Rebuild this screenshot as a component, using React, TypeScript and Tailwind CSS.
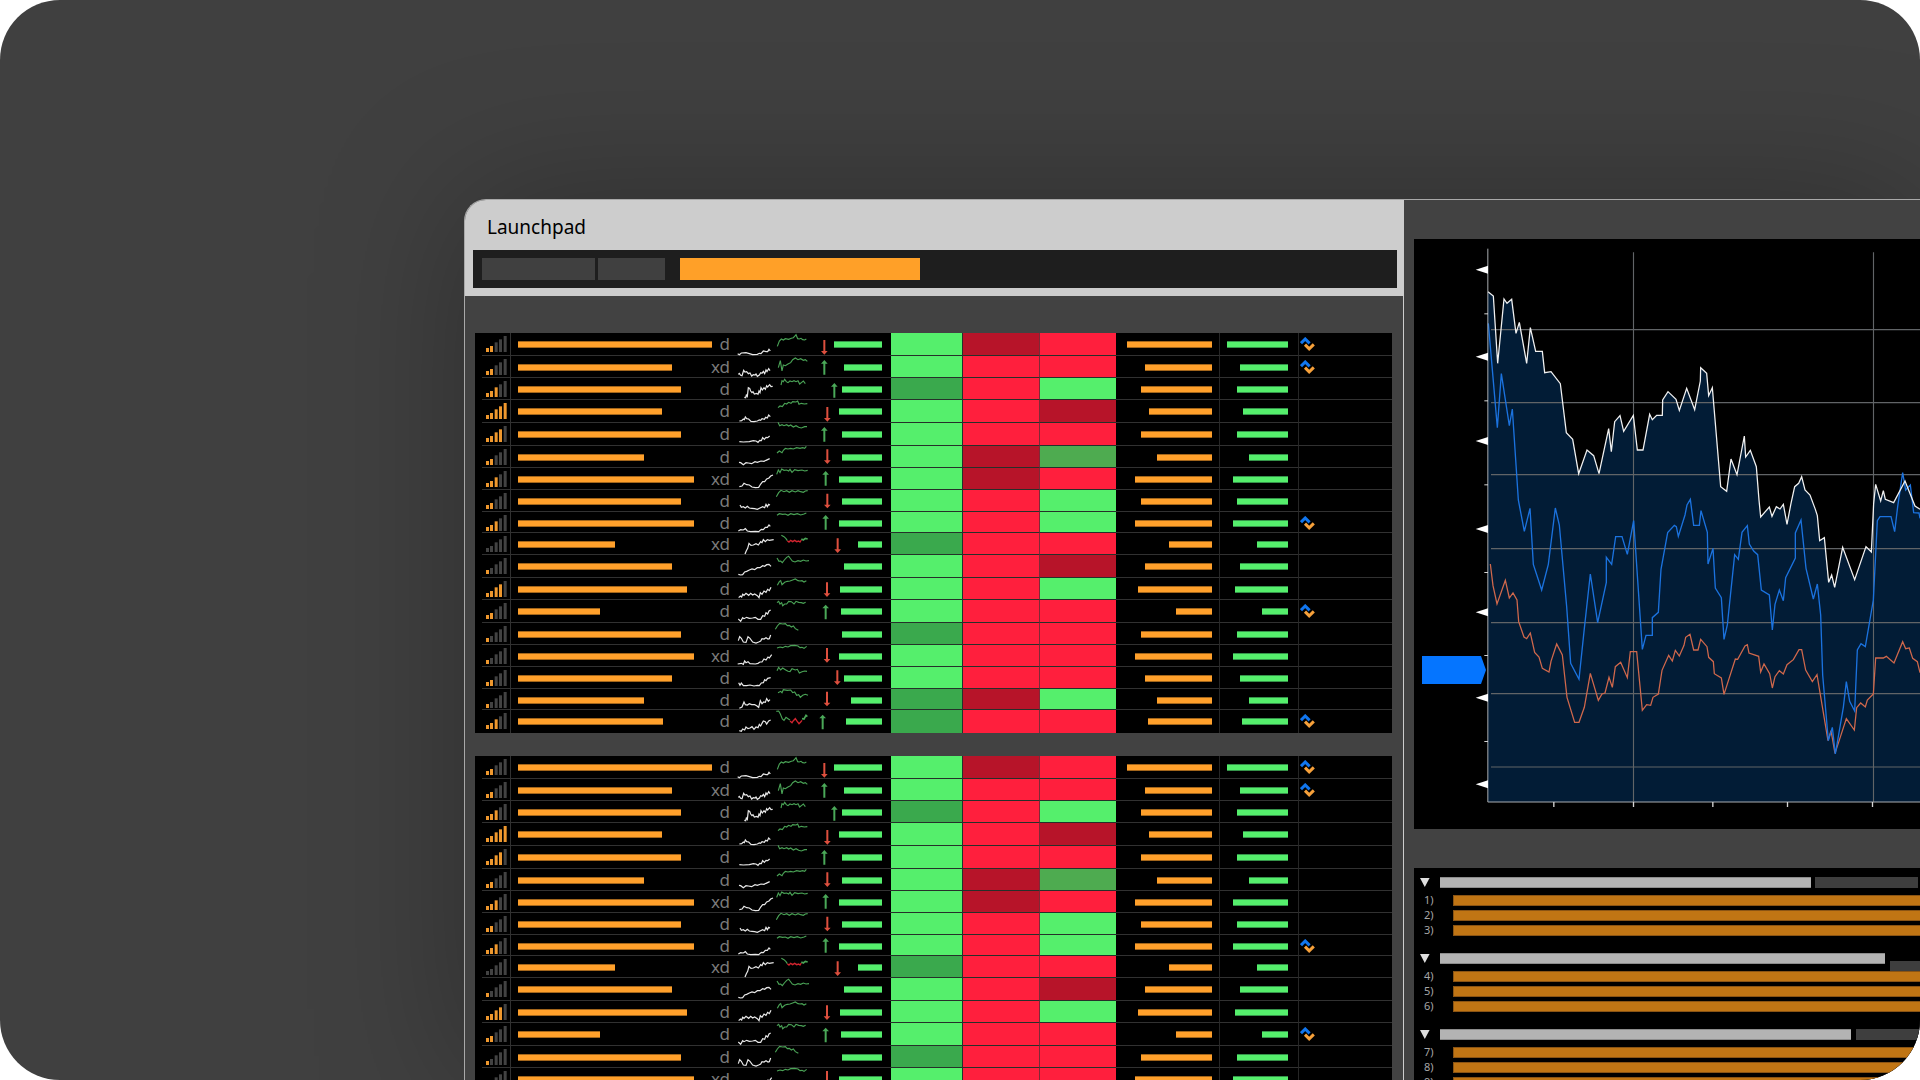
import clsx from "clsx";

type Heat = "g" | "G" | "m" | "r" | "R";

interface Row {
  h: string;
  signal: number;
  name: number;
  tag: "d" | "xd";
  low: string;
  high: string;
  dip?: string;
  tail?: string;
  arrow?: ["up" | "down", number, number];
  gain: number;
  heat: [Heat, Heat, Heat];
  ask: number;
  bid: number;
  swap?: boolean;
}

const H21 = "h-[21px]";
const H22 = "h-[22px]";
const H23 = "h-[23px]";

const heatColors: Record<Heat, string> = {
  g: "bg-[#55ef6c]",
  G: "bg-[#3aa94d]",
  m: "bg-[#4eab50]",
  r: "bg-[#ff1f3d]",
  R: "bg-[#b71429]",
};

// Sparkline points use three units per pixel
const rows: Row[] = [
  {
    h: H23, signal: 2, name: 194, tag: "d",
    low: "2,62 7,65 13,60 27,59 37,62 47,65 61,64 67,61 72,62 79,54 87,56 92,56 96,49 100,54",
    high: "121,40 127,24 133,18 139,21 145,17 155,19 163,16 169,14 174,9 177,5 182,17 187,18 192,16 197,20 203,21 208,18",
    arrow: ["down", 262, 21], gain: 48, heat: ["g", "R", "r"], ask: 85, bid: 61, swap: true,
  },
  {
    h: H22, signal: 2, name: 154, tag: "xd",
    low: "4,55 7,52 11,58 15,59 20,43 24,48 29,47 34,53 39,51 44,60 49,56 54,57 57,54 61,61 67,57 71,50 75,52 79,46 83,53 87,42 90,47 95,38 99,44",
    high: "124,35 130,14 135,45 139,27 145,29 153,24 161,20 167,11 175,6 183,11 191,8 199,13 205,11 211,16",
    arrow: ["up", 262, 12], gain: 38, heat: ["g", "r", "r"], ask: 67, bid: 48, swap: true,
  },
  {
    h: H22, signal: 3, name: 163, tag: "d",
    low: "22,58 26,59 28,51 31,55 34,29 38,31 41,39 45,44 48,41 52,48 59,46 63,49 66,39 69,44 72,29 76,36 81,29 85,34 89,23 92,27 98,20 102,26 107,25",
    high: "132,21 135,8 139,11 143,4 148,11 153,14 159,9 165,11 171,8 177,11 183,8 188,18 194,13 199,9 205,17",
    arrow: ["up", 292, 15], gain: 40, heat: ["G", "r", "g"], ask: 71, bid: 51,
  },
  {
    h: H23, signal: 5, name: 144, tag: "d",
    low: "7,63 14,62 19,57 22,59 25,51 29,56 35,57 42,64 51,65 61,63 67,60 71,61 75,56 82,58 86,52 91,54 95,45 100,50",
    high: "123,23 129,18 136,20 143,10 149,12 155,7 162,10 167,5 177,6 182,3 186,13 193,10 202,12 211,11",
    arrow: ["down", 271, 21], gain: 43, heat: ["g", "r", "R"], ask: 63, bid: 45,
  },
  {
    h: H23, signal: 4, name: 163, tag: "d",
    low: "7,56 19,57 37,56 49,53 57,54 63,58 68,52 73,53 77,44 82,49 87,43 92,44 98,39",
    high: "123,-2 128,8 135,5 141,8 149,5 155,9 161,6 169,12 177,8 185,13 193,15 203,11 210,11",
    arrow: ["up", 262, 12], gain: 40, heat: ["g", "r", "r"], ask: 71, bid: 51,
  },
  {
    h: H22, signal: 2, name: 126, tag: "d",
    low: "6,49 11,50 19,56 27,50 34,51 44,53 54,47 61,49 72,45 81,46 87,43 98,38",
    high: "120,21 127,15 135,20 139,13 145,7 153,9 161,7 169,9 179,5 189,7 197,5 203,7 208,1",
    arrow: ["down", 271, 10], gain: 40, heat: ["g", "R", "m"], ask: 55, bid: 39,
  },
  {
    h: H22, signal: 3, name: 176, tag: "xd",
    low: "7,56 15,54 21,46 29,50 37,51 45,57 55,59 65,58 71,48 77,41 83,41 89,33 96,30 101,24 108,21",
    high: "119,19 124,6 129,14 134,3 141,7 149,6 155,9 159,4 165,13 173,5 183,8 195,6 203,9 212,7",
    arrow: ["up", 266, 9], gain: 43, heat: ["g", "R", "r"], ask: 77, bid: 55,
  },
  {
    h: H22, signal: 2, name: 163, tag: "d",
    low: "9,45 13,52 19,50 25,54 31,49 37,54 45,55 53,56 61,58 69,54 77,50 83,53 87,43 91,50 95,43 99,45",
    high: "118,20 125,8 132,1 141,5 149,2 157,7 165,2 175,6 183,2 191,5 199,7 205,3 212,2",
    arrow: ["down", 271, 11], gain: 40, heat: ["g", "r", "g"], ask: 71, bid: 51,
  },
  {
    h: H21, signal: 3, name: 176, tag: "d",
    low: "4,57 11,53 19,54 25,50 31,57 41,59 55,58 65,59 73,52 79,53 85,46 91,46 96,39 100,43",
    high: "120,10 127,5 137,7 145,6 153,10 161,5 171,8 181,5 191,9 201,6 208,3",
    arrow: ["up", 266, 9], gain: 43, heat: ["g", "r", "g"], ask: 77, bid: 55, swap: true,
  },
  {
    h: H22, signal: 0, name: 97, tag: "xd",
    low: "24,63 28,53 32,46 36,31 42,37 49,36 57,32 64,36 71,26 75,29 79,20 85,26 91,20 97,22 110,20",
    high: "133,7 141,11 147,17 151,23",
    dip: "151,23 156,27 161,22 167,26 173,22 179,26 185,24 189,27 193,21",
    tail: "193,18 199,21 205,16 212,18",
    arrow: ["down", 302, 16], gain: 24, heat: ["G", "r", "r"], ask: 43, bid: 31,
  },
  {
    h: H23, signal: 1, name: 154, tag: "d",
    low: "4,58 11,60 17,59 23,51 29,49 37,45 45,42 53,44 61,38 69,38 77,32 83,34 89,29 96,28 102,34",
    high: "120,9 126,19 131,18 136,23 142,15 149,7 155,4 159,9 166,18 174,21 183,17 191,19 199,15 207,18 216,17",
    gain: 38, heat: ["g", "r", "R"], ask: 67, bid: 48,
  },
  {
    h: H22, signal: 4, name: 169, tag: "d",
    low: "5,59 10,54 14,57 17,49 21,52 27,46 35,52 41,46 47,51 53,48 61,53 66,59 70,44 75,49 81,39 87,43 92,34 97,38 102,28",
    high: "121,22 127,11 131,8 135,20 143,13 151,10 159,9 167,6 175,3 183,8 189,9 195,8 201,12 208,8",
    arrow: ["down", 270, 13], gain: 42, heat: ["g", "r", "g"], ask: 74, bid: 53,
  },
  {
    h: H23, signal: 2, name: 82, tag: "d",
    low: "4,57 11,64 17,53 21,56 29,52 37,55 47,54 55,52 63,58 71,58 77,47 83,49 87,38 92,42 96,33 101,30",
    high: "120,8 125,4 129,12 134,8 137,17 143,12 149,12 155,4 163,5 171,12 177,4 185,7 193,8 199,10 206,7",
    arrow: ["up", 266, 14], gain: 41, heat: ["g", "r", "r"], ask: 36, bid: 26, swap: true,
  },
  {
    h: H22, signal: 1, name: 163, tag: "d",
    low: "4,53 8,41 13,46 19,57 27,58 33,41 39,46 47,57 57,60 65,57 71,54 75,47 81,48 87,44 93,48 97,47 101,36",
    high: "115,19 121,9 128,1 137,3 145,2 151,8 157,7 163,12 169,9 175,17 184,22",
    gain: 40, heat: ["G", "r", "r"], ask: 71, bid: 51,
  },
  {
    h: H22, signal: 1, name: 176, tag: "xd",
    low: "2,57 13,55 19,58 23,48 27,53 33,50 39,56 55,57 63,55 69,51 75,51 81,42 87,45 93,36 97,39 104,29",
    high: "120,9 129,6 137,8 145,4 153,6 161,2 173,1 183,3 189,8 195,7 201,10 209,4",
    arrow: ["down", 270, 9], gain: 43, heat: ["g", "r", "r"], ask: 77, bid: 55,
  },
  {
    h: H22, signal: 2, name: 154, tag: "d",
    low: "5,47 9,55 13,48 19,56 29,56 39,54 51,57 61,55 67,56 73,48 79,47 83,38 87,41 92,34 101,32",
    high: "120,11 125,1 131,9 137,3 145,8 153,13 159,14 165,5 175,9 181,7 187,18 195,14 203,12 210,13",
    arrow: ["down", 301, 10], gain: 38, heat: ["g", "r", "r"], ask: 67, bid: 48,
  },
  {
    h: H21, signal: 1, name: 126, tag: "d",
    low: "7,58 15,54 21,39 25,47 31,48 37,44 44,47 53,47 59,50 65,55 70,35 75,44 80,39 85,40 89,29 94,37 99,32",
    high: "123,11 131,7 135,11 139,2 151,4 161,3 167,11 173,9 179,19 185,17 190,25 197,19 205,16 213,19",
    arrow: ["down", 270, 8], gain: 31, heat: ["G", "R", "g"], ask: 55, bid: 39,
  },
  {
    h: H23, signal: 3, name: 145, tag: "d",
    low: "7,62 13,64 17,57 23,60 27,51 33,56 39,54 45,50 51,58 57,51 63,53 67,43 71,48 75,40 79,33 85,35 89,42 95,33 101,30",
    high: "118,4 125,3 130,12 136,27 141,31 147,22 153,26 159,30",
    dip: "159,33 165,38 169,32 175,26 179,32 186,41 191,36 195,31",
    tail: "195,26 201,27 207,16 211,20",
    arrow: ["up", 257, 14], gain: 36, heat: ["G", "r", "r"], ask: 64, bid: 46, swap: true,
  },
];

const signalBars = [
  { x: 0, height: 12 },
  { x: 12, height: 18 },
  { x: 26, height: 29 },
  { x: 39, height: 38 },
  { x: 53, height: 48 },
];

const Signal = ({ level }: { level: number }) => (
  <svg className="ml-1 block h-[19px] w-[21px]" viewBox="0 0 63 57">
    {signalBars.map(({ x, height }, i) => (
      <rect key={x} x={x} y={57 - height} width="9" height={height} fill={i < level ? "#ef982e" : "#424242"} />
    ))}
  </svg>
);

const Bar = ({ width, green }: { width: number; green?: boolean }) => (
  <span
    className={clsx("block h-[7px] shrink-0 border-y", green ? "border-[#35944a] bg-[#55ef6c]" : "border-[#a3661b] bg-[#ffa02b]")}
    style={{ width }}
  />
);

const Trend = ({ row }: { row: Row }) => (
  <svg className="block h-5 w-[90px] shrink-0 overflow-visible" viewBox="0 3 270 60" fill="none" strokeWidth="3.4">
    <polyline points={row.low} stroke="#e9e9e9" strokeWidth="3.6" />
    <polyline points={row.high} stroke="#4aa356" />
    {row.dip && <polyline points={row.dip} stroke="#d3242f" strokeWidth="4" />}
    {row.tail && <polyline points={row.tail} stroke="#4aa356" strokeWidth="5" />}
    {row.arrow && (
      <g
        transform={`translate(${row.arrow[1]} ${row.arrow[2]})${row.arrow[0] === "down" ? " rotate(180 0 22)" : ""}`}
        fill={row.arrow[0] === "down" ? "#dd4f3e" : "#4aa858"}
      >
        <path d="M0 0L10 11H3V44H-3V11H-10Z" />
      </g>
    )}
  </svg>
);

const SwapIcon = () => (
  <svg className="block h-3.5 w-[15px]" viewBox="0 0 15 14" fill="none" strokeWidth="3">
    <path d="M1 6.2L5.2 2L9.6 6.4" stroke="#1176ee" />
    <path d="M5 7.6L9.2 11.8L13.8 7.4" stroke="#f6a03a" />
  </svg>
);

const Watchlist = () => (
  <table className="w-full table-fixed border-separate border-spacing-0 bg-black">
    <colgroup>
      <col className="w-[7px]" />
      <col className="w-[29px]" />
      <col className="w-[219px]" />
      <col className="w-[161px]" />
      <col className="w-[72px]" />
      <col className="w-[77px]" />
      <col className="w-[76px]" />
      <col className="w-[104px]" />
      <col className="w-[79px]" />
      <col />
    </colgroup>
    <tbody>
      {rows.map((row, i) => {
        const line = i < rows.length - 1 && "border-b border-b-[#313131]";
        const heatLine = i < rows.length - 1 && "border-b border-b-[#26302a]";
        return (
          <tr key={i} className={row.h}>
            <td className="p-0" />
            <td className={clsx("border-r border-r-[#313131] p-0 align-top", line)}>
              <Signal level={row.signal} />
            </td>
            <td className={clsx("p-0 align-top", line)}>
              <div className="flex h-5 items-center justify-between pt-0.5 pl-[7px]">
                <Bar width={row.name} />
                <span className="text-[17px] leading-5 text-[#7a7a7a]">{row.tag}</span>
              </div>
            </td>
            <td className={clsx("p-0 align-top", line)}>
              <div className="flex h-5 items-center justify-between pt-0.5 pr-[9px] pl-[7px]">
                <Trend row={row} />
                <Bar width={row.gain} green />
              </div>
            </td>
            <td className={clsx("border-r border-r-[#26302a] p-0", heatLine, heatColors[row.heat[0]])} />
            <td className={clsx("border-r border-r-[#7d2a37] p-0", heatLine, heatColors[row.heat[1]])} />
            <td className={clsx("p-0", heatLine, heatColors[row.heat[2]])} />
            <td className={clsx("border-r border-r-[#262626] p-0 align-top", line)}>
              <div className="flex h-5 items-center justify-end pt-0.5 pr-[7px]">
                <Bar width={row.ask} />
              </div>
            </td>
            <td className={clsx("border-r border-r-[#262626] p-0 align-top", line)}>
              <div className="flex h-5 items-center justify-end pt-0.5 pr-2.5">
                <Bar width={row.bid} green />
              </div>
            </td>
            <td className={clsx("p-0 pt-1 pl-px align-top", line)}>{row.swap && <SwapIcon />}</td>
          </tr>
        );
      })}
    </tbody>
  </table>
);

const whiteLine =
  "264,305 280,318 293,520 312,327 321,340 335,328 348,430 358,397 380,520 391,413 407,484 427,484 434,548 453,545 481,581 499,728 518,748 536,851 561,780 581,797 597,851 626,716 634,785 644,695 660,677 671,724 700,676 712,780 729,780 749,673 757,689 770,676 787,676 788,630 804,605 828,628 838,661 860,595 884,659 901,573 902,533 920,550 926,617 937,593 962,890 980,904 993,807 1011,854 1033,738 1037,801 1051,781 1069,830 1077,930 1082,981 1108,951 1116,979 1129,950 1140,957 1150,943 1161,1003 1173,940 1184,890 1196,880 1205,860 1215,900 1230,915 1246,958 1252,977 1259,1052 1273,1043 1286,1177 1295,1155 1304,1192 1328,1072 1364,1169 1398,1070 1414,1086 1421,940 1427,883 1442,933 1450,902 1456,928 1481,938 1515,873 1545,948 1560,958";

const blueLine =
  "265,400 292,713 304,551 328,707 337,657 355,930 373,1024 390,955 400,1123 425,1200 445,1123 466,954 478,1005 500,1250 512,1420 537,1468 553,1315 571,1152 593,1298 619,1177 619,1102 635,1123 647,1040 666,1040 682,1093 701,992 727,1378 738,1336 757,1336 757,1283 775,1267 783,1138 803,1028 823,1006 829,1010 835,1039 855,975 861,945 871,928 881,1006 898,1006 903,962 922,1027 924,1122 939,1075 946,1194 964,1223 972,1348 982,1305 1004,1094 1015,1108 1026,1027 1042,1007 1048,1062 1061,1083 1073,1094 1084,1200 1108,1215 1117,1320 1125,1243 1138,1200 1150,1232 1157,1163 1186,1104 1186,1029 1203,990 1218,1135 1240,1227 1252,1182 1262,1275 1268,1455 1285,1652 1297,1612 1306,1692 1330,1552 1339,1475 1349,1534 1364,1563 1372,1380 1383,1361 1396,1370 1420,1230 1432,992 1440,980 1473,980 1484,1025 1493,950 1508,848 1517,900 1531,885 1541,968 1557,969 1560,985";

const orangeLine =
  "271,1122 279,1187 291,1242 316,1171 328,1224 339,1209 351,1230 356,1295 372,1341 380,1346 391,1329 404,1387 417,1401 427,1435 447,1446 453,1414 470,1362 487,1395 501,1522 524,1597 537,1597 553,1552 571,1450 595,1531 606,1512 615,1509 627,1462 637,1492 646,1430 662,1417 682,1463 691,1385 710,1385 727,1561 740,1544 752,1546 759,1522 775,1512 786,1441 806,1396 817,1413 826,1381 838,1398 852,1366 857,1342 870,1333 881,1380 894,1380 902,1348 921,1370 926,1402 940,1415 943,1451 964,1464 972,1513 1006,1407 1013,1408 1035,1368 1042,1364 1047,1389 1076,1399 1082,1446 1092,1422 1109,1451 1117,1494 1125,1460 1138,1442 1150,1452 1161,1424 1180,1409 1197,1379 1205,1379 1217,1440 1237,1475 1251,1454 1284,1652 1293,1622 1305,1690 1339,1586 1363,1620 1370,1553 1382,1539 1396,1551 1402,1530 1420,1512 1427,1404 1450,1404 1459,1399 1482,1419 1508,1355 1517,1376 1528,1374 1538,1405 1552,1415 1560,1448";

const PriceChart = () => (
  <svg
    className="block h-[590px] w-full bg-black"
    viewBox="42 147 1518 1770"
    preserveAspectRatio="xMinYMin slice"
    fill="none"
  >
    <polygon points={`264,1836 ${whiteLine} 1560,1836`} fill="#021c36" />
    <g stroke="#616467" strokeWidth="3.4">
      {[419, 638, 854, 1076, 1298, 1511, 1731].map((y) => (
        <path key={y} d={`M273 ${y}H1560`} />
      ))}
      {[700.5, 1420.5].map((x) => (
        <path key={x} d={`M${x} 187V1836`} />
      ))}
    </g>
    <polyline points={orangeLine} stroke="#d0684c" strokeWidth="3.8" />
    <polyline points={blueLine} stroke="#1b72de" strokeWidth="4" />
    <polyline points={whiteLine} stroke="#f1f1f1" strokeWidth="3.8" />
    <path d="M263.5 176V1836H1560" stroke="#a9adb1" strokeWidth="3" />
    <g stroke="#d5d5d5" strokeWidth="3">
      {[371.5, 632.5, 884.5, 1147.5, 1396.5, 1654.5].map((y) => (
        <path key={y} d={`M253 ${y}H264`} />
      ))}
      {[461.5, 700.5, 938.5, 1162.5, 1417.5].map((x) => (
        <path key={x} d={`M${x} 1836V1851`} strokeWidth="4" />
      ))}
    </g>
    {[239, 500, 753, 1017, 1267, 1523, 1783].map((y) => (
      <path key={y} d={`M227 ${y}L264 ${y - 12}V${y + 12}Z`} fill="#fff" />
    ))}
    <path d="M66 1398H243L258 1440L243 1482H66Z" fill="#0575ff" />
  </svg>
);

const newsGroups = [
  { title: "w-[371px]", meta: "ml-[4px] w-[103px]", first: 1 },
  { title: "w-[445px]", meta: "mt-2 ml-[5px] w-[103px]", first: 4 },
  { title: "w-[411px]", meta: "ml-[5px] w-[103px]", first: 7 },
];

const NewsList = () => (
  <div className="flex-1 overflow-hidden bg-black pt-[9px]">
    {newsGroups.map((group) => (
      <div key={group.first} className="mb-[17px]">
        <div className="mb-[7px] flex h-[11px] pl-1.5">
          <svg className="mt-px mr-2.5 block h-[9px] w-2.5 shrink-0" viewBox="0 0 10 9">
            <path d="M0 0H9.6L4.8 9Z" fill="#dedede" />
          </svg>
          <span className={clsx("h-[11px] shrink-0 border-y border-[#8c8c8c] bg-[#b3b3b3]", group.title)} />
          <span className={clsx("h-[11px] shrink-0 bg-[#3e3e3e]", group.meta)} />
        </div>
        <ol className="flex flex-col gap-1">
          {[0, 1, 2].map((n) => (
            <li key={n} className="flex h-[11px]">
              <span className="w-[39px] shrink-0 pl-2.5 text-[11px] leading-[9px] text-[#a6a6a6]">
                {group.first + n})
              </span>
              <span className="h-[11px] flex-1 border-y border-l border-[#8a5414] bg-[#c07514]" />
            </li>
          ))}
        </ol>
      </div>
    ))}
  </div>
);

const App = () => {
  return (
    <div className="h-screen overflow-hidden rounded-[60px] bg-[#404040] pt-[199px] pl-116 font-['Noto_Sans',sans-serif]">
      <div className="grid h-full grid-cols-[939fr_516fr] overflow-hidden rounded-tl-[22px] border-t border-l border-[#a9a9a9] bg-[#424242] shadow-[0_0_150px_rgba(0,0,0,0.29)]">
        <section className="flex min-w-0 flex-col">
          <header className="h-24 shrink-0 bg-[#cdcdcd] px-2 pt-[13px]">
            <h1 className="mb-[9px] pl-3.5 text-[19px] leading-7 text-black">Launchpad</h1>
            <nav className="mr-[-1px] flex h-[38px] items-center bg-[#1e1e1e] pl-[9px]">
              <button aria-label="File" className="mr-[3px] h-[22px] w-[113px] bg-[#404040]" />
              <button aria-label="View" className="mr-[15px] h-[22px] w-[67px] bg-[#404040]" />
              <button aria-label="Search" className="h-[22px] w-60 bg-[#ffa028]" />
            </nav>
          </header>
          <div className="flex flex-1 flex-col gap-[23px] overflow-hidden border-r border-[#cdcdcd] pt-[37px] pr-[11px] pl-2.5">
            <Watchlist />
            <Watchlist />
          </div>
        </section>
        <section className="flex min-w-0 flex-col gap-[39px] overflow-hidden pt-[39px] pl-2.5">
          <PriceChart />
          <NewsList />
        </section>
      </div>
    </div>
  );
};

export default App;
